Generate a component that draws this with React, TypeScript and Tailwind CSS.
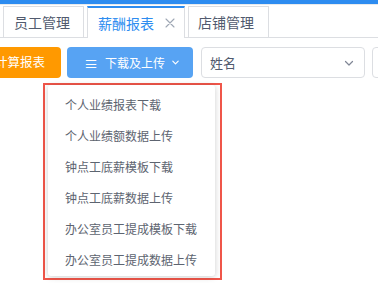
import React from "react";

const items = [
  "个人业绩报表下载",
  "个人业绩额数据上传",
  "钟点工底薪模板下载",
  "钟点工底薪数据上传",
  "办公室员工提成模板下载",
  "办公室员工提成数据上传",
];

export default function App() {
  return (
    <div
      className="relative w-[378px] h-[307px] overflow-hidden bg-white"
      style={{ fontFamily: '"Noto Sans CJK SC", "Noto Sans", sans-serif' }}
    >
      <div className="h-[4px] bg-[#2d8cf0]" />
      <div className="h-[1px] bg-[#e8eaec]" />
      <div className="h-[1px]" />
      {/* tabs */}
      <div className="flex items-end gap-[3px] pl-[3px] h-[32px] border-b border-[#dcdee2]">
        <div className="shrink-0 w-[81px] h-[31px] border border-b-0 border-[#dcdee2] bg-white flex items-center pl-[10px] text-[14px] text-[#515a6e]">
          员工管理
        </div>
        <div className="shrink-0 w-[98px] h-[32px] -mb-[1px] border border-b-0 border-[#dcdee2] border-t-2 border-t-[#2d8cf0] bg-white flex items-center pl-[10px] text-[14px] text-[#2d8cf0]">
          <span>薪酬报表</span>
          <svg className="ml-[11px]" width="10" height="10" viewBox="0 0 10 10" fill="none">
            <path d="M1 1 L9 9 M9 1 L1 9" stroke="#9ea7b4" strokeWidth="1.1" strokeLinecap="round" />
          </svg>
        </div>
        <div className="shrink-0 w-[81px] h-[31px] border border-b-0 border-[#dcdee2] bg-white flex items-center pl-[9px] text-[14px] text-[#515a6e]">
          店铺管理
        </div>
      </div>
      {/* buttons */}
      <div className="flex items-center mt-[9px] h-[31px]">
        <div className="shrink-0 -ml-[27px] w-[88px] h-[31px] rounded-[4px] bg-[#ff9900] flex items-center justify-center pl-[6px] text-[12.5px] text-white">
          计算报表
        </div>
        <div className="shrink-0 ml-[6px] w-[126px] h-[31px] rounded-[4px] bg-[#57a3f3] flex items-center text-[12px] text-white">
          <span className="ml-[17px] text-[14px] leading-none">≡</span>
          <span className="ml-[7px]">下载及上传</span>
          <svg className="ml-[6px]" width="9" height="9" viewBox="0 0 10 10" fill="none">
            <path d="M2 3.5 L5 6.5 L8 3.5" stroke="white" strokeWidth="1.3" strokeLinecap="round" strokeLinejoin="round" />
          </svg>
        </div>
        <div className="shrink-0 ml-[8px] w-[164px] h-[31px] rounded-[4px] border border-[#dcdee2] flex items-center justify-between pl-[8px] pr-[9px] text-[13px] text-[#515a6e]">
          <span>姓名</span>
          <svg width="12" height="12" viewBox="0 0 12 12" fill="none">
            <path d="M2.5 4.5 L6 8 L9.5 4.5" stroke="#808695" strokeWidth="1.2" strokeLinecap="round" strokeLinejoin="round" />
          </svg>
        </div>
        <div className="shrink-0 ml-[7px] w-[40px] h-[31px] rounded-[4px] border border-[#dcdee2]" />
      </div>
      {/* dropdown with highlight */}
      <div className="absolute left-[43px] top-[83px] w-[179px] h-[197px] border-2 border-[#f0564a]">
        <div className="ml-[3px] mr-[5px] bg-white shadow-[0_1px_6px_rgba(0,0,0,0.2)] rounded-[3px] pt-[4px] pb-[1px]">
          {items.map((t) => (
            <div key={t} className="h-[31px] flex items-center pl-[17px] text-[12px] text-[#5d6470]">
              {t}
            </div>
          ))}
        </div>
      </div>
    </div>
  );
}
